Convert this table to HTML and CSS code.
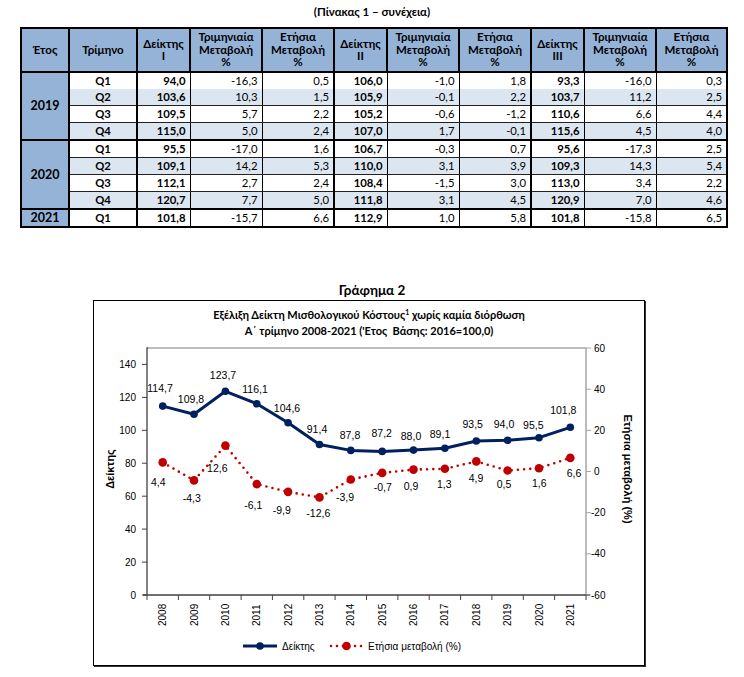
FILE: index.html
```html
<!DOCTYPE html>
<html lang="el">
<head>
<meta charset="utf-8">
<link rel="stylesheet" href="styles.css">
</head>
<body>
<div class="caption">(Πίνακας 1 – συνέχεια)</div>
<table class="tbl">
  <colgroup>
    <col class="c-yr"><col class="c-q"><col class="c-ix"><col class="c-ch"><col class="c-ch">
    <col class="c-ix"><col class="c-ch"><col class="c-ch"><col class="c-ix"><col class="c-ch"><col class="c-ch2">
  </colgroup>
  <thead>
    <tr>
      <th>Έτος</th><th>Τρίμηνο</th><th>Δείκτης<br>I</th><th>Τριμηνιαία<br>Μεταβολή<br>%</th><th>Ετήσια<br>Μεταβολή<br>%</th>
      <th>Δείκτης<br>II</th><th>Τριμηνιαία<br>Μεταβολή<br>%</th><th>Ετήσια<br>Μεταβολή<br>%</th>
      <th>Δείκτης<br>III</th><th>Τριμηνιαία<br>Μεταβολή<br>%</th><th>Ετήσια<br>Μεταβολή<br>%</th>
    </tr>
  </thead>
  <tbody>
    <tr class="noline"><td class="yr" rowspan="4">2019</td><td class="q">Q1</td><td class="ix">94,0</td><td>-16,3</td><td class="sep">0,5</td><td class="ix">106,0</td><td>-1,0</td><td class="sep">1,8</td><td class="ix">93,3</td><td>-16,0</td><td>0,3</td></tr>
    <tr class="alt"><td class="q">Q2</td><td class="ix">103,6</td><td>10,3</td><td class="sep">1,5</td><td class="ix">105,9</td><td>-0,1</td><td class="sep">2,2</td><td class="ix">103,7</td><td>11,2</td><td>2,5</td></tr>
    <tr><td class="q">Q3</td><td class="ix">109,5</td><td>5,7</td><td class="sep">2,2</td><td class="ix">105,2</td><td>-0,6</td><td class="sep">-1,2</td><td class="ix">110,6</td><td>6,6</td><td>4,4</td></tr>
    <tr class="alt end"><td class="q">Q4</td><td class="ix">115,0</td><td>5,0</td><td class="sep">2,4</td><td class="ix">107,0</td><td>1,7</td><td class="sep">-0,1</td><td class="ix">115,6</td><td>4,5</td><td>4,0</td></tr>
    <tr><td class="yr" rowspan="4">2020</td><td class="q">Q1</td><td class="ix">95,5</td><td>-17,0</td><td class="sep">1,6</td><td class="ix">106,7</td><td>-0,3</td><td class="sep">0,7</td><td class="ix">95,6</td><td>-17,3</td><td>2,5</td></tr>
    <tr class="alt"><td class="q">Q2</td><td class="ix">109,1</td><td>14,2</td><td class="sep">5,3</td><td class="ix">110,0</td><td>3,1</td><td class="sep">3,9</td><td class="ix">109,3</td><td>14,3</td><td>5,4</td></tr>
    <tr><td class="q">Q3</td><td class="ix">112,1</td><td>2,7</td><td class="sep">2,4</td><td class="ix">108,4</td><td>-1,5</td><td class="sep">3,0</td><td class="ix">113,0</td><td>3,4</td><td>2,2</td></tr>
    <tr class="alt end"><td class="q">Q4</td><td class="ix">120,7</td><td>7,7</td><td class="sep">5,0</td><td class="ix">111,8</td><td>3,1</td><td class="sep">4,5</td><td class="ix">120,9</td><td>7,0</td><td>4,6</td></tr>
    <tr class="end"><td class="yr">2021</td><td class="q">Q1</td><td class="ix">101,8</td><td>-15,7</td><td class="sep">6,6</td><td class="ix">112,9</td><td>1,0</td><td class="sep">5,8</td><td class="ix">101,8</td><td>-15,8</td><td>6,5</td></tr>
  </tbody>
</table>

<div class="chart-heading">Γράφημα 2</div>
<div class="chart-box">
  <div class="chart-title">Εξέλιξη Δείκτη Μισθολογικού Κόστους<sup>1</sup> χωρίς καμία διόρθωση<br>Α΄ τρίμηνο 2008-2021 ('Ετος&nbsp; Βάσης: 2016=100,0)</div>
  <svg class="chart" width="550" height="326" viewBox="94 340 550 326" xmlns="http://www.w3.org/2000/svg">
    <!-- plot frame -->
    <line x1="147" y1="349" x2="586" y2="349" stroke="#a6a6a6" stroke-width="1.5"/>
    <line x1="586" y1="349" x2="586" y2="596" stroke="#a6a6a6" stroke-width="1.5"/>
    <line x1="147" y1="348.3" x2="147" y2="596" stroke="#404040" stroke-width="1.3"/>
    <line x1="143" y1="596" x2="590" y2="596" stroke="#404040" stroke-width="1.3"/>
    <!-- left ticks -->
    <g stroke="#404040" stroke-width="1">
      <line x1="142" y1="596" x2="147" y2="596"/>
      <line x1="142" y1="563.1" x2="147" y2="563.1"/>
      <line x1="142" y1="530.1" x2="147" y2="530.1"/>
      <line x1="142" y1="497.2" x2="147" y2="497.2"/>
      <line x1="142" y1="464.2" x2="147" y2="464.2"/>
      <line x1="142" y1="431.3" x2="147" y2="431.3"/>
      <line x1="142" y1="398.4" x2="147" y2="398.4"/>
      <line x1="142" y1="365.4" x2="147" y2="365.4"/>
    </g>
    <g class="ax" text-anchor="end">
      <text x="136" y="599.5">0</text>
      <text x="136" y="566.6">20</text>
      <text x="136" y="533.6">40</text>
      <text x="136" y="500.7">60</text>
      <text x="136" y="467.7">80</text>
      <text x="136" y="434.8">100</text>
      <text x="136" y="401.9">120</text>
      <text x="136" y="368.9">140</text>
    </g>
    <!-- right ticks -->
    <g stroke="#a6a6a6" stroke-width="1">
      <line x1="586" y1="349" x2="591" y2="349"/>
      <line x1="586" y1="390.2" x2="591" y2="390.2"/>
      <line x1="586" y1="431.3" x2="591" y2="431.3"/>
      <line x1="586" y1="472.5" x2="591" y2="472.5"/>
      <line x1="586" y1="513.7" x2="591" y2="513.7"/>
      <line x1="586" y1="554.8" x2="591" y2="554.8"/>
      <line x1="586" y1="596" x2="591" y2="596"/>
    </g>
    <g class="ax">
      <text x="594" y="352.5">60</text>
      <text x="594" y="393.7">40</text>
      <text x="594" y="434.8">20</text>
      <text x="594" y="476">0</text>
      <text x="591" y="517.2">-20</text>
      <text x="591" y="558.3">-40</text>
      <text x="591" y="599.5">-60</text>
    </g>
    <!-- bottom ticks -->
    <g stroke="#404040" stroke-width="1">
      <line x1="147" y1="596" x2="147" y2="601"/>
      <line x1="178.4" y1="596" x2="178.4" y2="601"/>
      <line x1="209.7" y1="596" x2="209.7" y2="601"/>
      <line x1="241.1" y1="596" x2="241.1" y2="601"/>
      <line x1="272.4" y1="596" x2="272.4" y2="601"/>
      <line x1="303.8" y1="596" x2="303.8" y2="601"/>
      <line x1="335.1" y1="596" x2="335.1" y2="601"/>
      <line x1="366.5" y1="596" x2="366.5" y2="601"/>
      <line x1="397.9" y1="596" x2="397.9" y2="601"/>
      <line x1="429.2" y1="596" x2="429.2" y2="601"/>
      <line x1="460.6" y1="596" x2="460.6" y2="601"/>
      <line x1="491.9" y1="596" x2="491.9" y2="601"/>
      <line x1="523.3" y1="596" x2="523.3" y2="601"/>
      <line x1="554.6" y1="596" x2="554.6" y2="601"/>
      <line x1="586" y1="596" x2="586" y2="601"/>
    </g>
    <g class="ax">
      <text x="166.2" y="627" transform="rotate(-90 166.2 627)">2008</text>
      <text x="197.5" y="627" transform="rotate(-90 197.5 627)">2009</text>
      <text x="228.9" y="627" transform="rotate(-90 228.9 627)">2010</text>
      <text x="260.2" y="627" transform="rotate(-90 260.2 627)">2011</text>
      <text x="291.6" y="627" transform="rotate(-90 291.6 627)">2012</text>
      <text x="323" y="627" transform="rotate(-90 323 627)">2013</text>
      <text x="354.3" y="627" transform="rotate(-90 354.3 627)">2014</text>
      <text x="385.7" y="627" transform="rotate(-90 385.7 627)">2015</text>
      <text x="417" y="627" transform="rotate(-90 417 627)">2016</text>
      <text x="448.4" y="627" transform="rotate(-90 448.4 627)">2017</text>
      <text x="479.7" y="627" transform="rotate(-90 479.7 627)">2018</text>
      <text x="511.1" y="627" transform="rotate(-90 511.1 627)">2019</text>
      <text x="542.5" y="627" transform="rotate(-90 542.5 627)">2020</text>
      <text x="573.8" y="627" transform="rotate(-90 573.8 627)">2021</text>
    </g>
    <!-- axis titles -->
    <text class="axt" x="114" y="470" text-anchor="middle" transform="rotate(-90 114 470)">Δείκτης</text>
    <text class="axt" x="624" y="470" text-anchor="middle" transform="rotate(90 624 470)">Ετήσια μεταβολή (%)</text>

    <!-- annual change series -->
    <polyline fill="none" stroke="#c00000" stroke-width="2.6" stroke-linecap="round" stroke-dasharray="0 6.2"
      points="162.7,463.4 194,481.4 225.4,446.6 256.8,485.1 288.1,492.9 319.5,498.4 350.8,480.5 382.2,473.9 413.5,470.6 444.9,469.8 476.3,462.4 507.6,471.5 539,469.2 570.3,458.9"/>
    <g fill="#c00000">
      <circle cx="162.7" cy="463.4" r="4.3"/><circle cx="194" cy="481.4" r="4.3"/><circle cx="225.4" cy="446.6" r="4.3"/>
      <circle cx="256.8" cy="485.1" r="4.3"/><circle cx="288.1" cy="492.9" r="4.3"/><circle cx="319.5" cy="498.4" r="4.3"/>
      <circle cx="350.8" cy="480.5" r="4.3"/><circle cx="382.2" cy="473.9" r="4.3"/><circle cx="413.5" cy="470.6" r="4.3"/>
      <circle cx="444.9" cy="469.8" r="4.3"/><circle cx="476.3" cy="462.4" r="4.3"/><circle cx="507.6" cy="471.5" r="4.3"/>
      <circle cx="539" cy="469.2" r="4.3"/><circle cx="570.3" cy="458.9" r="4.3"/>
    </g>
    <!-- index series -->
    <polyline fill="none" stroke="#002060" stroke-width="3" stroke-linejoin="round"
      points="162.7,407.1 194,415.2 225.4,392.3 256.8,404.8 288.1,423.7 319.5,445.5 350.8,451.4 382.2,452.4 413.5,451.1 444.9,449.3 476.3,442 507.6,441.2 539,438.7 570.3,428.3"/>
    <g fill="#002060">
      <circle cx="162.7" cy="407.1" r="3.8"/><circle cx="194" cy="415.2" r="3.8"/><circle cx="225.4" cy="392.3" r="3.8"/>
      <circle cx="256.8" cy="404.8" r="3.8"/><circle cx="288.1" cy="423.7" r="3.8"/><circle cx="319.5" cy="445.5" r="3.8"/>
      <circle cx="350.8" cy="451.4" r="3.8"/><circle cx="382.2" cy="452.4" r="3.8"/><circle cx="413.5" cy="451.1" r="3.8"/>
      <circle cx="444.9" cy="449.3" r="3.8"/><circle cx="476.3" cy="442" r="3.8"/><circle cx="507.6" cy="441.2" r="3.8"/>
      <circle cx="539" cy="438.7" r="3.8"/><circle cx="570.3" cy="428.3" r="3.8"/>
    </g>
    <!-- index labels -->
    <g class="lbl" text-anchor="middle">
      <text x="160" y="392.5">114,7</text>
      <text x="191" y="403.5">109,8</text>
      <text x="223" y="379.5">123,7</text>
      <text x="255" y="393.5">116,1</text>
      <text x="287" y="412.8">104,6</text>
      <text x="317" y="434.2">91,4</text>
      <text x="350" y="439.5">87,8</text>
      <text x="381.7" y="438.2">87,2</text>
      <text x="411" y="440.7">88,0</text>
      <text x="440" y="439.2">89,1</text>
      <text x="472.7" y="429.2">93,5</text>
      <text x="504" y="429.2">94,0</text>
      <text x="533.3" y="429.5">95,5</text>
      <text x="563.3" y="414.5">101,8</text>
    </g>
    <!-- change labels -->
    <g class="lbl" text-anchor="middle">
      <text x="158.3" y="486.8">4,4</text>
      <text x="191.7" y="502.8">-4,3</text>
      <text x="217.3" y="472.8">12,6</text>
      <text x="253.3" y="510.2">-6,1</text>
      <text x="281.7" y="515.2">-9,9</text>
      <text x="318.3" y="517.5">-12,6</text>
      <text x="345" y="501.8">-3,9</text>
      <text x="382.7" y="491.8">-0,7</text>
      <text x="411" y="490.5">0,9</text>
      <text x="444.3" y="488.5">1,3</text>
      <text x="476" y="482.8">4,9</text>
      <text x="504" y="489.2">0,5</text>
      <text x="539.3" y="487.8">1,6</text>
      <text x="574" y="477.8">6,6</text>
    </g>
    <!-- legend -->
    <line x1="243" y1="647" x2="277" y2="647" stroke="#002060" stroke-width="3"/>
    <circle cx="260" cy="647" r="3.8" fill="#002060"/>
    <text class="lg" x="282" y="651">Δείκτης</text>
    <line x1="331" y1="647" x2="362" y2="647" stroke="#c00000" stroke-width="2.6" stroke-linecap="round" stroke-dasharray="0 6"/>
    <circle cx="346.5" cy="647" r="4.3" fill="#c00000"/>
    <text class="lg" x="368" y="651">Ετήσια μεταβολή (%)</text>
  </svg>
</div>
</body>
</html>
```
FILE: styles.css
```css
html, body {
  margin: 0;
  padding: 0;
  background: #fff;
}
body {
  width: 744px;
  height: 677px;
  font-family: Lato, "Liberation Sans", sans-serif;
  color: #000;
  overflow: hidden;
}
.caption {
  margin-top: 5px;
  height: 14px;
  line-height: 14px;
  text-align: center;
  font-weight: bold;
  font-size: 11.5px;
}
.tbl {
  margin: 8px 0 0 20px;
  border-collapse: collapse;
  table-layout: fixed;
  width: 703px;
  border: 2px solid #000;
}
.c-yr { width: 48px; }
.c-q { width: 68px; }
.c-ix { width: 53px; }
.c-ch { width: 72px; }
.c-ch2 { width: 71px; }
.tbl th {
  background: #95b3d7;
  border: 2px solid #000;
  height: 42px;
  padding: 0;
  font-size: 11.5px;
  line-height: 12.5px;
  font-weight: bold;
  text-align: center;
  vertical-align: middle;
}
.tbl td {
  height: 16px;
  padding: 0 4px 0 0;
  font-size: 11.3px;
  line-height: 14px;
  text-align: right;
  vertical-align: middle;
  border-left: 1px solid #000;
  border-right: 1px solid #000;
  border-bottom: 1px solid #222;
}
.tbl tr.noline td { border-bottom: none; }
.tbl tr.alt td { background: #dce6f1; }
.tbl tr.end td { border-bottom: 2px solid #000; }
.tbl td.q {
  text-align: center;
  font-weight: bold;
  padding: 0;
  border-left: 2px solid #000;
  border-right: 2px solid #000;
}
.tbl td.ix { font-weight: bold; border-right-width: 1.5px; }
.tbl td.sep { border-right: 2px solid #000; }
.tbl td.yr {
  background: #95b3d7;
  text-align: center;
  padding: 0;
  font-weight: bold;
  font-size: 12.5px;
  border: 2px solid #000;
}
.chart-heading {
  margin-top: 53px;
  height: 18px;
  line-height: 18px;
  text-align: center;
  font-weight: bold;
  font-size: 13.5px;
}
.chart-box {
  margin: 1px 0 0 93px;
  width: 550px;
  height: 364px;
  border: 1px solid #000;
  box-shadow: 1px 1px 0 #333;
  display: flex;
  flex-direction: column;
  overflow: hidden;
}
.chart-title {
  padding-top: 6px;
  height: 32px;
  line-height: 16px;
  text-align: center;
  font-weight: bold;
  font-size: 11px;
}
.chart-title sup {
  font-size: 7px;
  line-height: 0;
  vertical-align: 4px;
}
.chart {
  display: block;
  flex: none;
}
.ax, .lg {
  font-family: "Liberation Sans", Arial, sans-serif;
  font-size: 10px;
  fill: #000;
}
.lbl {
  font-family: "Liberation Sans", Arial, sans-serif;
  font-size: 10.5px;
  fill: #000;
}
.axt {
  font-family: "Liberation Sans", Arial, sans-serif;
  font-size: 11px;
  font-weight: bold;
  fill: #000;
}
```
